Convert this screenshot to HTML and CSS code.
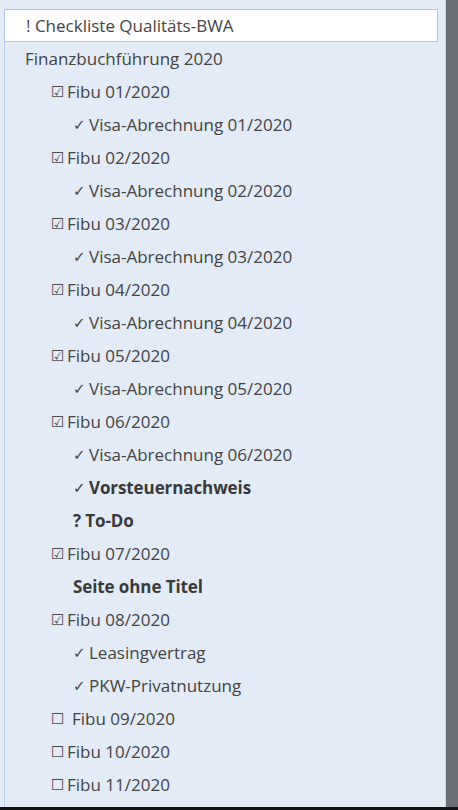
FILE: index.html
```html
<!DOCTYPE html>
<html lang="de">
<head>
<meta charset="utf-8">
<title>Seiten</title>
<link rel="stylesheet" href="styles.css">
</head>
<body>
<div class="app">
  <div class="panel">
    <ul class="pages">
      <li class="row l0 selected">! Checkliste Qualitäts-BWA</li>
      <li class="row l0">Finanzbuchführung 2020</li>
      <li class="row l1"><span class="sym">☑</span>Fibu 01/2020</li>
      <li class="row l2"><span class="tick">✓</span>Visa-Abrechnung 01/2020</li>
      <li class="row l1"><span class="sym">☑</span>Fibu 02/2020</li>
      <li class="row l2"><span class="tick">✓</span>Visa-Abrechnung 02/2020</li>
      <li class="row l1"><span class="sym">☑</span>Fibu 03/2020</li>
      <li class="row l2"><span class="tick">✓</span>Visa-Abrechnung 03/2020</li>
      <li class="row l1"><span class="sym">☑</span>Fibu 04/2020</li>
      <li class="row l2"><span class="tick">✓</span>Visa-Abrechnung 04/2020</li>
      <li class="row l1"><span class="sym">☑</span>Fibu 05/2020</li>
      <li class="row l2"><span class="tick">✓</span>Visa-Abrechnung 05/2020</li>
      <li class="row l1"><span class="sym">☑</span>Fibu 06/2020</li>
      <li class="row l2"><span class="tick">✓</span>Visa-Abrechnung 06/2020</li>
      <li class="row l2 bold"><span class="tick">✓</span>Vorsteuernachweis</li>
      <li class="row l2 bold">? To-Do</li>
      <li class="row l1"><span class="sym">☑</span>Fibu 07/2020</li>
      <li class="row l2 bold">Seite ohne Titel</li>
      <li class="row l1"><span class="sym">☑</span>Fibu 08/2020</li>
      <li class="row l2"><span class="tick">✓</span>Leasingvertrag</li>
      <li class="row l2"><span class="tick">✓</span>PKW-Privatnutzung</li>
      <li class="row l1"><span class="sym wide">☐</span>Fibu 09/2020</li>
      <li class="row l1"><span class="sym">☐</span>Fibu 10/2020</li>
      <li class="row l1"><span class="sym">☐</span>Fibu 11/2020</li>
    </ul>
  </div>
  <div class="scrollbar"></div>
</div>
<div class="bottom"></div>
</body>
</html>
```

FILE: styles.css
```css
html, body {
  margin: 0;
  padding: 0;
  height: 810px;
  overflow: hidden;
  background: #e2ebf6;
}

body {
  font-family: "Open Sans", "Liberation Sans", sans-serif;
  font-size: 17px;
  color: #444444;
}

.app {
  display: flex;
  height: 807px;
}

.panel {
  flex: 1;
  padding-top: 9px;
  background: #e2ebf6;
  border-right: 1px solid #cdd9e6;
}

.pages {
  list-style: none;
  margin: 0 0 0 4px;
  padding: 0;
  width: 433px;
  border-left: 1px solid #b7cfea;
  height: 798px;
}

.row {
  height: 33px;
  display: flex;
  align-items: center;
  white-space: pre;
  box-sizing: border-box;
}

.row.l0 { padding-left: 20px; }
.row.l1 { padding-left: 46px; }
.row.l2 { padding-left: 68px; }

.row.selected {
  background: #ffffff;
  border: 1px solid #a9c8ec;
  margin-left: -1px;
  padding-left: 21px;
}

.bold {
  font-weight: 700;
  color: #3a3a3a;
  letter-spacing: -0.1px;
}

.sym {
  font-family: "DejaVu Sans", sans-serif;
  font-size: 15px;
  width: 16px;
  color: #4a4a4a;
}

.sym.wide { width: 21px; }

.tick {
  font-family: "DejaVu Sans", sans-serif;
  font-size: 15px;
  width: 16px;
}

.bold .tick { font-weight: 700; }

.scrollbar {
  width: 12px;
  background: #6a7075;
}

.bottom {
  height: 3px;
  background: #111111;
}
```
